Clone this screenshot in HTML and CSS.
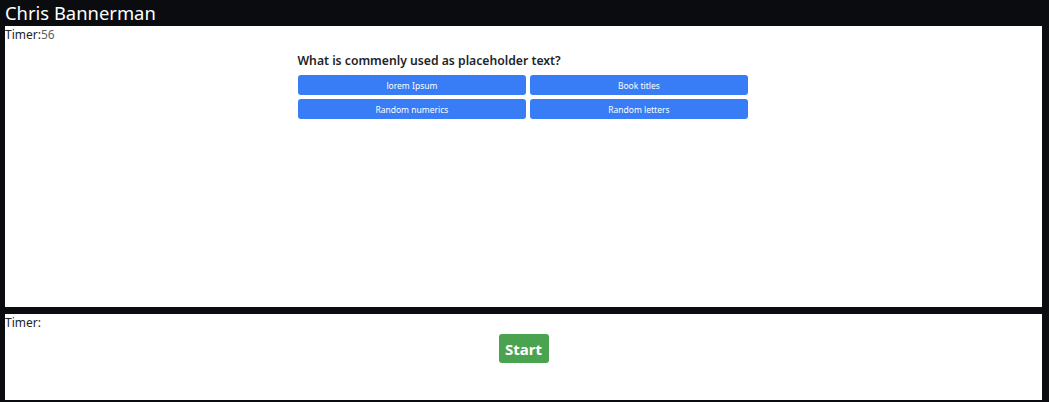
FILE: index.html
```html
<!DOCTYPE html>
<html lang="en">
<head>
<meta charset="utf-8">
<title>Quiz</title>
<link rel="stylesheet" href="styles.css">
</head>
<body>
<header class="site-header">Chris Bannerman</header>
<main class="panels">
  <section class="panel panel-quiz">
    <div class="timer">Timer:<span class="timer-value">56</span></div>
    <div class="quiz">
      <h2 class="question">What is commenly used as placeholder text?</h2>
      <div class="answers">
        <button class="answer">lorem Ipsum</button>
        <button class="answer">Book titles</button>
        <button class="answer">Random numerics</button>
        <button class="answer">Random letters</button>
      </div>
    </div>
  </section>
  <section class="panel panel-start">
    <div class="timer">Timer:</div>
    <div class="start-row">
      <button class="start">Start</button>
    </div>
  </section>
</main>
</body>
</html>
```
FILE: styles.css
```css
html, body {
  margin: 0;
  padding: 0;
}
body {
  background: #0b0c10;
  font-family: "Noto Sans", "Open Sans", sans-serif;
  color: #212529;
  height: 402px;
  overflow: hidden;
}
.site-header {
  color: #ffffff;
  font-size: 18.4px;
  line-height: 26px;
  height: 26px;
  padding-left: 5px;
}
.panels {
  display: flex;
  flex-direction: column;
  gap: 7px;
  padding: 0 7px 0 5px;
}
.panel {
  background: #ffffff;
}
.panel-quiz {
  height: 281px;
}
.panel-start {
  height: 86px;
}
.timer {
  font-size: 12px;
  line-height: 17px;
  color: #212529;
}
.timer-value {
  color: #5a5f66;
}
.quiz {
  width: 450px;
  margin: 0 auto;
  padding-top: 9px;
  transform: translateX(-1px);
}
.question {
  margin: 0 0 6px 0;
  font-size: 12.2px;
  font-weight: 600;
  line-height: 17px;
  color: #212529;
}
.answers {
  display: grid;
  grid-template-columns: auto auto;
  gap: 4px;
}
.answer {
  height: 20px;
  border: none;
  border-radius: 3px;
  background: #387cf6;
  color: #ffffff;
  font-family: "Noto Sans", "Open Sans", sans-serif;
  font-size: 8.5px;
  padding: 0 4px;
  cursor: pointer;
}
.start-row {
  display: flex;
  justify-content: center;
  padding-top: 3px;
}
.start {
  height: 29px;
  width: 50px;
  border: none;
  border-radius: 3px;
  background: #4aa44f;
  color: #ffffff;
  font-family: "Noto Sans", "Open Sans", sans-serif;
  font-size: 15px;
  font-weight: 700;
  padding: 0;
  cursor: pointer;
}
```
